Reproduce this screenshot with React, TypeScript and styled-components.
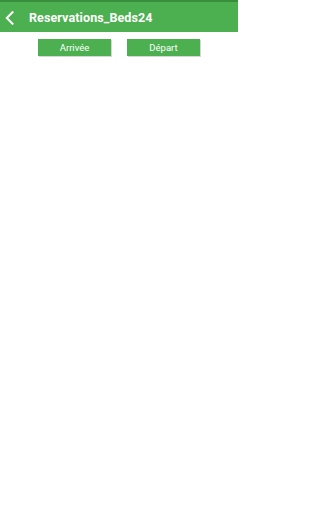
import React from 'react'
import styled, { createGlobalStyle } from 'styled-components';

const GlobalStyle = createGlobalStyle`
    html, body {
        margin: 0;
        padding: 0;
        background: #ffffff;
        font-family: Roboto, "Noto Sans", sans-serif;
    }
`;

const App = () => {
    return (
        <Page>
            <GlobalStyle />
            <StatusStrip />
            <Header>
                <BackButton aria-label="back">
                    <svg width="9" height="14" viewBox="0 0 9 14">
                        <path d="M7.5 1.2 L1.8 7 L7.5 12.8" fill="none" stroke="#fff" strokeWidth="2" strokeLinecap="square" />
                    </svg>
                </BackButton>
                <Title>Reservations_Beds24</Title>
            </Header>
            <ButtonRow>
                <ActionButton>Arrivée</ActionButton>
                <ActionButton>Départ</ActionButton>
            </ButtonRow>
        </Page>
    )
}

const Page = styled.div`
    width: 238px;
    min-height: 100vh;
    display: flex;
    flex-direction: column;
`;

const StatusStrip = styled.div`
    height: 2px;
    background-color: #388e3c;
`;

const Header = styled.div`
    height: 30px;
    background-color: #4caf50;
    display: flex;
    align-items: center;
    padding-left: 5px;
`;

const BackButton = styled.div`
    width: 10px;
    height: 14px;
    display: flex;
    align-items: center;
    margin-right: 14px;
    margin-top: 1px;
`;

const Title = styled.div`
    color: #ffffff;
    font-size: 12.5px;
    font-weight: 700;
    letter-spacing: 0.1px;
`;

const ButtonRow = styled.div`
    display: flex;
    justify-content: center;
    gap: 16px;
    padding-top: 7px;
`;

const ActionButton = styled.div`
    width: 73px;
    height: 17px;
    background-color: #4caf50;
    color: #ffffff;
    font-size: 9.5px;
    display: flex;
    align-items: center;
    justify-content: center;
    box-shadow: 1px 1px 0 #d6d6d6;
`;

export default App;
